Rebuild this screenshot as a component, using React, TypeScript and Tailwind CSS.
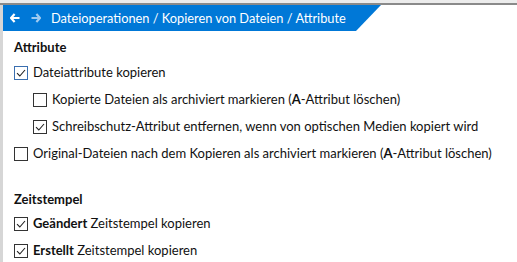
import React from "react";

type Item = {
  label: React.ReactNode;
  checked: boolean;
  indent?: boolean;
  focus?: boolean;
};

const Check = ({ checked, focus }: { checked: boolean; focus?: boolean }) => (
  <span
    className={
      "inline-flex h-[14px] w-[14px] shrink-0 items-center justify-center border bg-white " +
      (focus ? "border-[#3a6fb0]" : "border-[#333]")
    }
  >
    {checked && (
      <svg width="10" height="10" viewBox="0 0 10 10">
        <path d="M1 5.2 L3.8 8 L9 2" fill="none" stroke="#222" strokeWidth="1.1" />
      </svg>
    )}
  </span>
);

const Row = ({ label, checked, indent, focus }: Item) => (
  <div className={"flex h-[27px] items-center gap-[5px] " + (indent ? "pl-[19px]" : "")}>
    <Check checked={checked} focus={focus} />
    <span className="whitespace-nowrap text-[13px] text-[#111]">{label}</span>
  </div>
);

const attributes: Item[] = [
  { label: "Dateiattribute kopieren", checked: true, focus: true },
  {
    label: (
      <>
        Kopierte Dateien als archiviert markieren (<b className="font-bold">A</b>-Attribut löschen)
      </>
    ),
    checked: false,
    indent: true,
  },
  {
    label: "Schreibschutz-Attribut entfernen, wenn von optischen Medien kopiert wird",
    checked: true,
    indent: true,
  },
  {
    label: (
      <>
        Original-Dateien nach dem Kopieren als archiviert markieren (<b className="font-bold">A</b>-Attribut löschen)
      </>
    ),
    checked: false,
  },
];

const timestamps: Item[] = [
  {
    label: (
      <>
        <b className="font-bold">Geändert</b> Zeitstempel kopieren
      </>
    ),
    checked: true,
  },
  {
    label: (
      <>
        <b className="font-bold">Erstellt</b> Zeitstempel kopieren
      </>
    ),
    checked: true,
  },
];

export default function App() {
  return (
    <div className="h-[262px] w-[517px] overflow-hidden bg-white font-['Lato',sans-serif]">
      <div className="h-[3px] bg-[#ececec]" />
      <div className="h-[2px] bg-[#8a8a8a]" />
      <div className="flex h-[257px] border-l-[3px] border-[#d6d6d6]">
        <div className="flex-1">
          {/* breadcrumb bar with slanted right edge */}
          <div className="flex h-[26px] w-[378px] items-center bg-[#0078d7] pl-[7px] text-white [clip-path:polygon(0_0,100%_0,calc(100%-25px)_100%,0_100%)]">
            <svg width="10" height="10" viewBox="0 0 10 10" className="shrink-0">
              <path d="M4.6 1 L1 5 L4.6 9 M1.5 5 H9.5" fill="none" stroke="#fff" strokeWidth="2.2" />
            </svg>
            <svg width="10" height="10" viewBox="0 0 10 10" className="ml-[11px] shrink-0">
              <path d="M5.4 1 L9 5 L5.4 9 M8.5 5 H0.5" fill="none" stroke="#9fcaf0" strokeWidth="2.2" />
            </svg>
            <span className="ml-[10px] whitespace-nowrap text-[12.8px] leading-none">
              Dateioperationen / Kopieren von Dateien / Attribute
            </span>
          </div>
          <div className="px-[11px] pt-[5px]">
            <div className="h-[22px] text-[13px] font-bold leading-[22px] text-[#111]">Attribute</div>
            <div className="pt-[1px]">
              {attributes.map((a, i) => (
                <Row key={i} {...a} />
              ))}
            </div>
            <div className="mt-[21px] h-[22px] text-[13px] font-bold leading-[22px] text-[#111]">Zeitstempel</div>
            {timestamps.map((a, i) => (
              <Row key={i} {...a} />
            ))}
          </div>
        </div>
      </div>
    </div>
  );
}
